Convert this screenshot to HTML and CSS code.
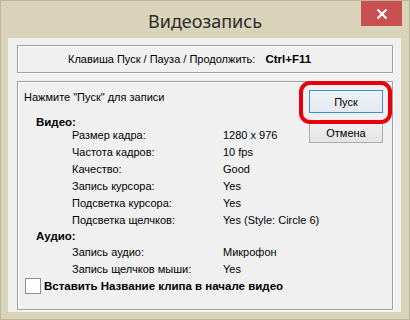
FILE: index.html
```html
<!DOCTYPE html>
<html>
  <head>
    <meta charset="utf-8" />
    <title>Видеозапись</title>
    <link rel="stylesheet" href="styles.css">
  </head>
  <body>
    <div class="window">
      <div class="titlebar">
        <span></span>
        <h1 class="title">Видеозапись</h1>
        <button class="close" title="Закрыть">
          <svg width="12" height="10" viewBox="0 0 12 10">
            <path d="M1.5 0.5 L10.5 9.5 M10.5 0.5 L1.5 9.5" stroke="#fff" stroke-width="2.2" />
          </svg>
        </button>
      </div>

      <div class="client">
        <div class="group hotkey">
          <span>Клавиша Пуск / Пауза / Продолжить:</span>
          <b>Ctrl+F11</b>
        </div>

        <div class="group settings">
          <div class="settings-main">
            <div class="info">
              <p class="hint">Нажмите "Пуск" для записи</p>

              <h2 class="section section-video">Видео:</h2>
              <div class="row"><span class="label">Размер кадра:</span><span>1280 x 976</span></div>
              <div class="row"><span class="label">Частота кадров:</span><span>10 fps</span></div>
              <div class="row"><span class="label">Качество:</span><span>Good</span></div>
              <div class="row"><span class="label">Запись курсора:</span><span>Yes</span></div>
              <div class="row"><span class="label">Подсветка курсора:</span><span>Yes</span></div>
              <div class="row"><span class="label">Подсветка щелчков:</span><span>Yes (Style: Circle 6)</span></div>

              <h2 class="section section-audio">Аудио:</h2>
              <div class="row"><span class="label">Запись аудио:</span><span>Микрофон</span></div>
              <div class="row"><span class="label">Запись щелчков мыши:</span><span>Yes</span></div>
            </div>

            <div class="actions">
              <div class="primary-wrap">
                <button class="btn btn-primary">Пуск</button>
                <span class="highlight"></span>
              </div>
              <button class="btn">Отмена</button>
            </div>
          </div>

          <label class="clip-title">
            <span class="checkbox"></span>
            Вставить Название клипа в начале видео
          </label>
        </div>
      </div>
    </div>
  </body>
</html>
```

FILE: styles.css
```css
html,
body {
  margin: 0;
  padding: 0;
}

body {
  width: 410px;
  height: 320px;
  overflow: hidden;
  background-color: #d9d3ba;
  font-family: "Liberation Sans", Arial, sans-serif;
  font-size: 11px;
  color: #000;
}

.window {
  box-sizing: border-box;
  width: 410px;
  height: 320px;
  border: 1px solid #bdb69c;
  background-color: #d9d3ba;
  display: flex;
  flex-direction: column;
}

.titlebar {
  height: 37px;
  display: grid;
  grid-template-columns: 1fr auto 1fr;
  align-items: center;
}

.title {
  margin: 0;
  font-family: "Noto Sans", sans-serif;
  font-weight: normal;
  font-size: 18px;
  color: #2b2b2b;
  line-height: 24px;
  padding-top: 3px;
}

.close {
  justify-self: end;
  align-self: start;
  width: 41px;
  height: 25px;
  margin-right: 7px;
  padding: 0;
  border: none;
  background-color: #c85050;
  display: flex;
  align-items: center;
  justify-content: center;
}

.client {
  flex: 1;
  margin: 0 8px 7px 7px;
  background-color: #f0f0f0;
  padding: 7px 8px 0 9px;
  display: flex;
  flex-direction: column;
  gap: 8px;
}

.group {
  border: 1px solid #a0a0a0;
  box-shadow: 1px 1px 0 #fff, inset 1px 1px 0 #fff;
}

.hotkey {
  height: 26px;
  display: flex;
  align-items: center;
  gap: 10px;
  padding-left: 50px;
}

.hotkey b {
  font-size: 11.5px;
}

.settings {
  height: 220px;
  padding: 7px 0 0 6px;
}

/* buttons sit in the same grid row as the info list, over its right side */
.settings-main {
  display: grid;
  grid-template-columns: 1fr 74px;
  margin-right: 9px;
}

.info {
  grid-column: 1 / span 2;
  grid-row: 1;
}

.actions {
  grid-column: 2;
  grid-row: 1;
  align-self: start;
  display: flex;
  flex-direction: column;
  gap: 9px;
  margin-top: 1px;
}

.hint {
  margin: 0;
  line-height: 17px;
}

.section {
  margin: 0;
  padding-left: 12px;
  font-size: 11.5px;
  font-weight: bold;
}

.section-video {
  margin-top: 12px;
  line-height: 9px;
}

.section-audio {
  line-height: 15px;
}

.row {
  display: flex;
  line-height: 17px;
  padding-left: 48px;
  white-space: nowrap;
}

.row .label {
  width: 151px;
}

.primary-wrap {
  position: relative;
}

.btn {
  box-sizing: border-box;
  width: 74px;
  height: 21px;
  padding: 0;
  border: 1px solid #acacac;
  background: linear-gradient(#f0f0f0, #e3e3e3);
  font-family: "Liberation Sans", Arial, sans-serif;
  font-size: 11px;
  color: #000;
}

.btn-primary {
  height: 23px;
  border-color: #3c8fd6;
  background: linear-gradient(#eef3f8, #e3e9ef);
}

.highlight {
  position: absolute;
  left: -10px;
  top: -9px;
  right: -9px;
  bottom: -11px;
  border: 4px solid #e8000c;
  border-radius: 11px;
}

.clip-title {
  display: flex;
  align-items: center;
  gap: 3px;
  padding-left: 1px;
  font-weight: bold;
  font-size: 11.5px;
  line-height: 16px;
}

.checkbox {
  box-sizing: border-box;
  width: 16px;
  height: 16px;
  border: 1px solid #8f8f8f;
  background-color: #fff;
}
```
